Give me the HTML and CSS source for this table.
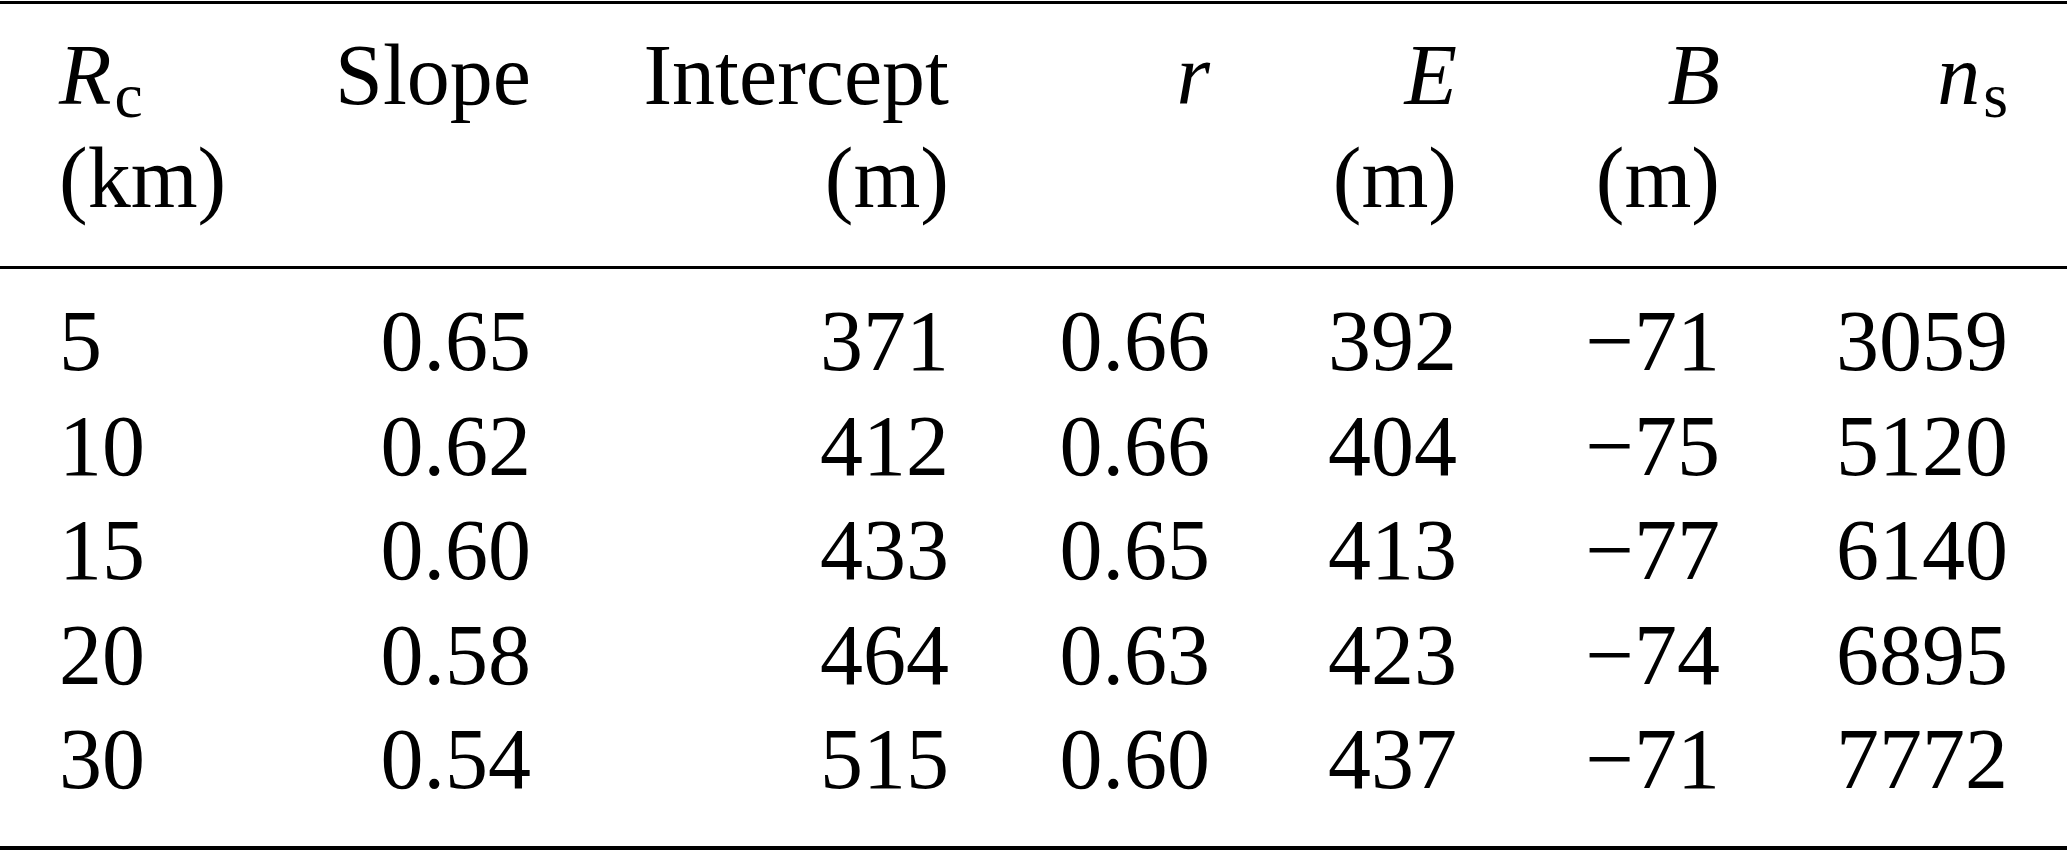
FILE: index.html
```html
<!DOCTYPE html>
<html lang="en">
<head>
<meta charset="utf-8">
<title>Table</title>
<link rel="stylesheet" href="styles.css">
</head>
<body>
<table class="data">
  <colgroup>
    <col class="c1"><col class="c2"><col class="c3"><col class="c4"><col class="c5"><col class="c6"><col class="c7">
  </colgroup>
  <thead>
    <tr>
      <th class="first"><i>R</i><span class="sub">c</span><br>(km)</th>
      <th>Slope</th>
      <th>Intercept<br>(m)</th>
      <th><i>r</i></th>
      <th><i>E</i><br>(m)</th>
      <th><i>B</i><br>(m)</th>
      <th class="last"><i>n</i><span class="sub">s</span></th>
    </tr>
  </thead>
  <tbody>
    <tr><td class="first">5</td><td>0.65</td><td>371</td><td>0.66</td><td>392</td><td>−71</td><td class="last">3059</td></tr>
    <tr><td class="first">10</td><td>0.62</td><td>412</td><td>0.66</td><td>404</td><td>−75</td><td class="last">5120</td></tr>
    <tr><td class="first">15</td><td>0.60</td><td>433</td><td>0.65</td><td>413</td><td>−77</td><td class="last">6140</td></tr>
    <tr><td class="first">20</td><td>0.58</td><td>464</td><td>0.63</td><td>423</td><td>−74</td><td class="last">6895</td></tr>
    <tr><td class="first">30</td><td>0.54</td><td>515</td><td>0.60</td><td>437</td><td>−71</td><td class="last">7772</td></tr>
  </tbody>
</table>
</body>
</html>
```

FILE: styles.css
```css
html, body {
  margin: 0;
  padding: 0;
  background: #fff;
}
body {
  padding-top: 1px;
}
.data {
  width: 2067px;
  table-layout: fixed;
  border-collapse: collapse;
  font-family: "Liberation Serif", "Times New Roman", serif;
  font-size: 86px;
  line-height: 104.5px;
  color: #000;
  border-top: 3px solid #000;
  border-bottom: 4px solid #000;
}
.c1 { width: 200px; }
.c2 { width: 331px; }
.c3 { width: 418px; }
.c4 { width: 261px; }
.c5 { width: 247px; }
.c6 { width: 263px; }
.c7 { width: 347px; }

.data th,
.data td {
  padding: 0;
  text-align: right;
  vertical-align: top;
  font-weight: normal;
  white-space: nowrap;
}
.data th {
  line-height: 103px;
  padding-top: 20px;
  padding-bottom: 36px;
  border-bottom: 3px solid #000;
}
.data .first {
  text-align: left;
  padding-left: 59px;
}
.data .last {
  padding-right: 59px;
}
.data tbody tr:first-child td {
  padding-top: 20px;
}
.data tbody tr:last-child td {
  padding-bottom: 34px;
}
.data i {
  font-style: italic;
}
.sub {
  font-size: 0.74em;
  line-height: 0;
  vertical-align: -13px;
  margin-left: 3px;
}
```
